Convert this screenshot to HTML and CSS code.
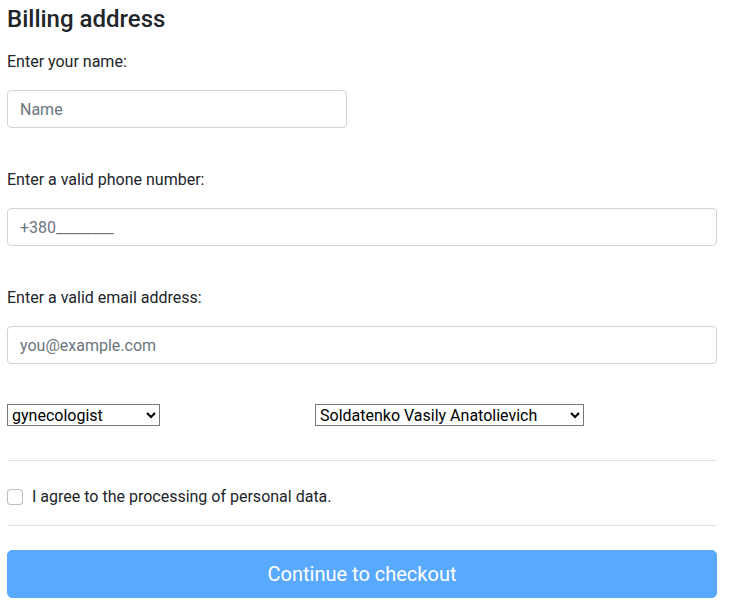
FILE: index.html
```html
<!DOCTYPE html>
<html lang="en">
<head>
<meta charset="utf-8">
<title>Billing address</title>
<link rel="stylesheet" href="styles.css">
</head>
<body>
<main class="page">
  <h4 class="title">Billing address</h4>
  <form class="form">
    <div class="group">
      <label class="label" for="name">Enter your name:</label>
      <input class="control control-short" id="name" type="text" placeholder="Name">
    </div>
    <div class="group">
      <label class="label" for="phone">Enter a valid phone number:</label>
      <input class="control" id="phone" type="tel" placeholder="+380________">
    </div>
    <div class="group">
      <label class="label" for="email">Enter a valid email address:</label>
      <input class="control" id="email" type="email" placeholder="you@example.com">
    </div>
    <div class="selects">
      <div class="select-cell">
        <select class="select select-spec">
          <option>gynecologist</option>
          <option>therapist</option>
          <option>surgeon</option>
        </select>
      </div>
      <div class="select-cell">
        <select class="select select-doc">
          <option>Soldatenko Vasily Anatolievich</option>
        </select>
      </div>
    </div>
    <hr class="rule rule-top">
    <div class="check">
      <input class="check-input" type="checkbox" id="agree">
      <label class="check-label" for="agree">I agree to the processing of personal data.</label>
    </div>
    <hr class="rule rule-bottom">
    <button class="btn" type="submit" disabled>Continue to checkout</button>
  </form>
</main>
</body>
</html>
```

FILE: styles.css
```css
* { box-sizing: border-box; }

html, body {
  margin: 0;
  background: #fff;
}

body {
  font-family: Roboto, "Liberation Sans", Arial, sans-serif;
  font-size: 16px;
  line-height: 1.5;
  color: #212529;
}

.page {
  width: 729px;
  padding: 0 12px 0 7px;
}

.title {
  margin: 5px 0 0;
  font-size: 24px;
  font-weight: 500;
  line-height: 1.2;
  color: #212529;
}

.form {
  display: flex;
  flex-direction: column;
}

.group {
  display: flex;
  flex-direction: column;
  align-items: flex-start;
  margin-top: 16px;
}

.group + .group {
  margin-top: 40px;
}

.label {
  display: block;
  margin-bottom: 16px;
}

.control {
  display: block;
  width: 100%;
  height: 38px;
  padding: 7px 12px 5px;
  font-family: inherit;
  font-size: 16px;
  line-height: 1.5;
  color: #495057;
  background: #fff;
  border: 1px solid #ced4da;
  border-radius: 4px;
  outline: none;
}

.control::placeholder {
  color: #6c757d;
  opacity: 1;
}

.control-short {
  width: 340px;
}

.selects {
  display: grid;
  grid-template-columns: 308px 1fr;
  margin-top: 40px;
}

.select {
  font-family: inherit;
  font-size: 16px;
  color: #000;
  height: 22px;
  background: #fff;
  border: 1px solid #767676;
  border-radius: 0;
}

.select-spec { width: 153px; }
.select-doc { width: 269px; }

.rule {
  width: 100%;
  margin: 0;
  border: 0;
  border-top: 1px solid #e3e3e3;
}

.rule-top { margin-top: 32px; }

.check {
  display: flex;
  align-items: flex-start;
  gap: 9px;
  margin-top: 24px;
}

.check-input {
  appearance: none;
  -webkit-appearance: none;
  width: 16px;
  height: 16px;
  margin: 4px 0 0;
  border: 1px solid rgba(0, 0, 0, 0.25);
  border-radius: 4px;
  background: #fff;
  flex: none;
}

.check-label {
  line-height: 24px;
}

.rule-bottom { margin-top: 16px; }

.btn {
  margin-top: 24px;
  width: 100%;
  height: 48px;
  padding: 8px 16px;
  font-family: inherit;
  font-size: 20px;
  line-height: 1.5;
  color: #fff;
  background: #59a9ff;
  border: 1px solid #59a9ff;
  border-radius: 5px;
}
```
